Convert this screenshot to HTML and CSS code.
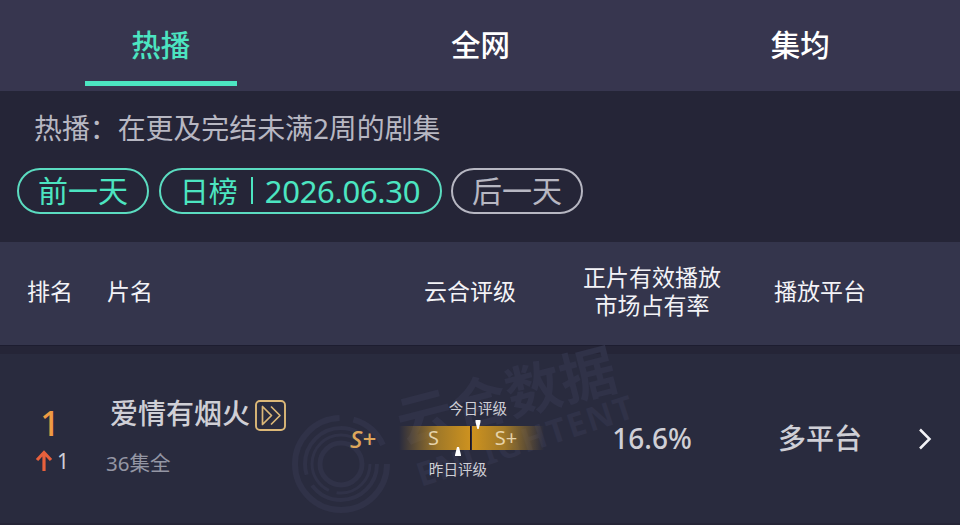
FILE: index.html
```html
<!DOCTYPE html>
<html lang="zh-CN">
<head>
<meta charset="utf-8">
<title>热播榜</title>
<link rel="stylesheet" href="styles.css">
</head>
<body>
<nav class="tabs">
  <a class="tab active"><span>热播</span></a>
  <a class="tab"><span>全网</span></a>
  <a class="tab"><span>集均</span></a>
</nav>
<section class="filters">
  <p class="hint">热播：在更及完结未满2周的剧集</p>
  <div class="pills">
    <button class="pill side">前一天</button>
    <button class="pill date"><span class="kind">日榜</span><i></i><span class="num">2026.06.30</span></button>
    <button class="pill side off">后一天</button>
  </div>
</section>
<header class="cols head">
  <span class="center">排名</span>
  <span class="name-head">片名</span>
  <span class="rating-head">云合评级</span>
  <span class="center">正片有效播放<br>市场占有率</span>
  <span class="center">播放平台</span>
</header>
<main class="list">
  <article class="cols row">
    <svg class="watermark" width="370" height="180" viewBox="280 345 370 180">
      <g fill="none" stroke="#303248">
        <circle cx="341" cy="464" r="46" stroke-width="6" stroke-dasharray="215 14 40 20"/>
        <circle cx="341" cy="464" r="36" stroke-width="4" stroke-dasharray="90 12 104 20"/>
        <circle cx="341" cy="464" r="29" stroke-width="3" stroke-dasharray="50 8 100 24"/>
        <circle cx="341" cy="464" r="21" stroke-width="5"/>
      </g>
      <g fill="#303248">
        <text class="wm-cn" transform="translate(403 444) rotate(-14.5)">云合数据</text>
        <text class="wm-en" transform="translate(421 487) rotate(-18)" textLength="226">ENLIGHTENT</text>
      </g>
    </svg>
    <div class="rank">
      <b>1</b>
      <div class="change">
        <svg width="18" height="22" viewBox="0 0 18 22"><path d="M9 21V3M2 10L9 2.5L16 10" fill="none" stroke="#e8603c" stroke-width="3.2"/></svg>
        <span>1</span>
      </div>
    </div>
    <div class="title">
      <div class="title-line"><h2>爱情有烟火</h2>
        <svg width="31" height="31" viewBox="0 0 31 31" fill="none" stroke="#dcb878" stroke-width="1.9"><rect x="1" y="1" width="29" height="29" rx="4"/><path d="M7.5 6.5V24.5L16.5 15.5ZM16 6.5L25 15.5L16 24.5" stroke-width="1.7" stroke-linejoin="round"/></svg>
      </div>
      <p>36集全</p>
    </div>
    <div class="rating">
      <em>S+</em>
      <div class="scale">
        <span class="today">今日评级</span>
        <div class="bar">
          <span class="before">S</span><span class="after">S+</span>
          <svg class="mark down" width="6" height="9" viewBox="0 0 6 9"><path d="M.5 0H5.5V2L3.7 9H2.3L.5 2Z" fill="#fff"/></svg>
          <svg class="mark up" width="8" height="9" viewBox="0 0 8 9"><path d="M3 0H5L7 8V9H1V8Z" fill="#fff"/></svg>
        </div>
        <span class="yesterday">昨日评级</span>
      </div>
    </div>
    <div class="share">16.6%</div>
    <div class="platform">多平台</div>
    <svg class="chevron" width="14" height="22" viewBox="0 0 14 22"><path d="M2 1.5L11.5 11L2 20.5" fill="none" stroke="#f4f4f8" stroke-width="2.5"/></svg>
  </article>
</main>
</body>
</html>
```

FILE: styles.css
```css
* { box-sizing: border-box; }
body {
  margin: 0;
  height: 525px;
  overflow: hidden;
  background: #252537;
  color: #f3f3f7;
  font-family: "Noto Sans", "Noto Sans CJK SC", sans-serif;
}
h2, p { margin: 0; }
.tabs {
  display: grid;
  grid-template-columns: repeat(3, 1fr);
  height: 91px;
  padding-left: 1px;
  background: #37364f;
}
.tab {
  display: flex;
  justify-content: center;
  height: 86px;
  font-size: 29.5px;
  line-height: 90px;
  font-weight: 500;
  color: #fff;
}
.tab.active { color: #4ce5c1; }
.tab.active span {
  width: 152px;
  text-align: center;
  border-bottom: 5px solid #4ce5c1;
}
.filters { height: 151px; padding: 17px 17px 0; }
.hint {
  padding-left: 17px;
  font-size: 27.9px;
  line-height: 40px;
  color: #b7b7c2;
}
.pills { display: flex; gap: 9.5px; margin-top: 20px; }
.pill {
  display: flex;
  align-items: center;
  justify-content: center;
  height: 46px;
  padding: 0 0 4px;
  border: 2px solid #5bdcc0;
  border-radius: 23px;
  background: transparent;
  color: #4ce5c1;
  font: inherit;
  font-size: 30px;
}
.side { width: 132px; }
.date { width: 283px; font-size: 29px; padding-bottom: 1px; }
.kind { padding-bottom: 1px; }
.date i { width: 2px; height: 27px; margin: 0 12px 0 13px; background: #4ce5c1; }
.num { font-size: 31px; letter-spacing: -.3px; }
.off { color: #b7b7c2; border-color: #b7b7c2; }
.cols {
  display: grid;
  grid-template-columns: 100px 245px 237px 140px 196px 42px;
  align-items: center;
}
.head {
  height: 104px;
  padding-bottom: 6px;
  background: #34354c;
  border-bottom: 1px solid #1d1d30;
  font-size: 23px;
  line-height: 28px;
}
.center { text-align: center; white-space: nowrap; }
.name-head { padding-left: 7px; }
.rating-head { padding-left: 13px; text-align: center; }
.list { padding-top: 8px; }
.row {
  position: relative;
  height: 169px;
  background: #292b3e;
  color: #cfcfd6;
}
.row > div { position: relative; }
.watermark { position: absolute; left: 280px; top: -9px; }
.wm-cn { font-size: 56px; font-weight: 700; }
.wm-en { font-size: 33px; font-weight: 700; }
.rank { padding-top: 4px; text-align: center; }
.rank b {
  display: block;
  font-size: 34px;
  font-weight: 500;
  line-height: 40px;
  color: #ee9b43;
}
.change {
  display: flex;
  justify-content: center;
  align-items: center;
  gap: 4px;
  margin-left: 4px;
  font-size: 21px;
  line-height: 36px;
}
.title { padding-left: 6px; }
.title-line { display: flex; align-items: center; gap: 5px; padding: 0 0 0 4px; }
h2 { margin-top: -6px; font-size: 28px; line-height: 40px; font-weight: 500; }
.title-line svg { margin-top: -1px; }
.title p { margin-top: 15px; font-size: 20.5px; line-height: 30px; color: #9496a4; }
.rating { display: flex; align-items: center; padding-left: 5px; }
.rating em { width: 49px; font-size: 24px; font-weight: 500; color: #dda65b; }
.scale { width: 145px; font-size: 14.6px; line-height: 20px; }
.today, .yesterday { display: block; text-align: center; }
.today { padding: 0 0 8px 13px; }
.yesterday { padding: 9px 27px 1px 0; }
.bar {
  position: relative;
  display: grid;
  grid-template-columns: 71px 72px;
  gap: 2px;
  height: 24px;
  font-size: 20px;
  line-height: 23px;
  text-align: center;
  color: #e6d3aa;
  background: linear-gradient(90deg, transparent 70px, #20131a 70px, #20131a 72px, transparent 72px);
}
.before { padding-right: 2px; background: linear-gradient(90deg, transparent, #a17928 55%, #cd921f); }
.after { padding-right: 4px; background: linear-gradient(270deg, transparent, #a17928 55%, #cd921f); }
.mark { position: absolute; }
.down { left: 76px; top: -6px; }
.up { left: 55px; bottom: -6px; }
.share { padding-bottom: 2px; font-size: 28px; font-weight: 500; text-align: center; }
.platform { padding-bottom: 4px; font-size: 28px; font-weight: 500; text-align: center; }
.chevron { position: relative; }
```
